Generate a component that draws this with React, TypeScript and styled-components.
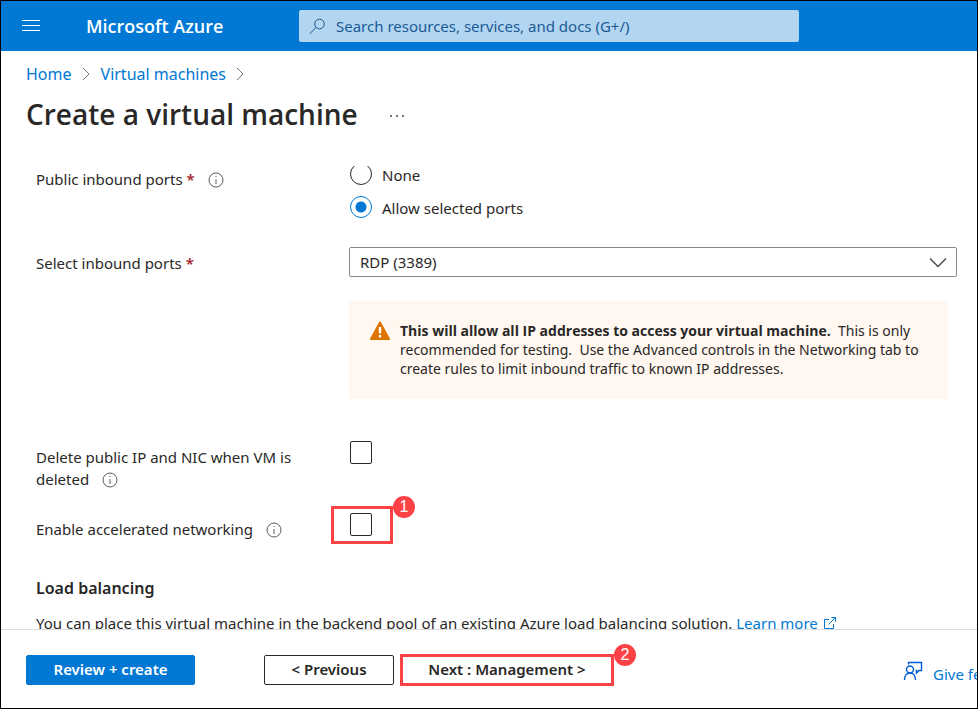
import React, { useLayoutEffect, useRef } from "react";
import styled, { createGlobalStyle } from "styled-components";

const blue = "#0078d4";
const ink = "#292827";
const callout = "#fd4245";

const GlobalStyle = createGlobalStyle`
  *, *::before, *::after { box-sizing: border-box; }
  body { margin: 0; background: #fff; }
  body, button, input, select {
    font-family: "Noto Sans", "Open Sans", sans-serif;
    font-size: 15px;
    line-height: 22px;
    color: ${ink};
  }
  h1, h2, p { margin: 0; }
`;

const Shell = styled.div`
  display: flex;
  flex-direction: column;
  height: 100vh;
  border: 1px solid #000;
  overflow: hidden;
`;

const TopBar = styled.header`
  display: flex;
  align-items: center;
  flex: none;
  height: 50px;
  padding: 0 20px;
  background: ${blue};
`;

const IconButton = styled.button`
  display: inline-flex;
  align-items: center;
  justify-content: center;
  padding: 0;
  border: 0;
  background: none;
  color: inherit;
  cursor: pointer;
`;

const MenuButton = styled(IconButton)`
  width: 20px;
  height: 20px;
  color: #fff;
`;

const Brand = styled.a`
  flex: 0 0 213px;
  margin-left: 45px;
  color: #fff;
  font-family: "Open Sans", sans-serif;
  font-size: 18px;
  font-weight: 600;
  text-decoration: none;
  white-space: nowrap;
`;

const SearchBox = styled.label`
  display: flex;
  align-items: center;
  flex: 0 1 500px;
  height: 32px;
  padding: 0 10px;
  gap: 10px;
  border-radius: 2px;
  background: #b2d6f2;
  color: #1b5a94;
`;

const SearchInput = styled.input`
  flex: 1;
  min-width: 0;
  padding: 0;
  border: 0;
  outline: 0;
  background: none;
  &::placeholder { color: #1b5a94; opacity: 1; }
`;

const PageHead = styled.div`
  flex: none;
  height: 115px;
  padding: 12px 25px 0;
`;

const Crumbs = styled.nav`
  display: flex;
  align-items: center;
  gap: 9px;
  font-size: 16px;
  color: #777;
`;

const Link = styled.a`
  color: ${blue};
  text-decoration: none;
`;

const TitleRow = styled.div`
  display: flex;
  align-items: center;
  gap: 30px;
  margin-top: 9px;
`;

const Title = styled.h1`
  font-family: "Open Sans", sans-serif;
  font-size: 28px;
  line-height: 40px;
  font-weight: 600;
`;

const MoreButton = styled(IconButton)`
  margin-top: 4px;
`;

const Scroller = styled.main`
  flex: 1;
  min-height: 0;
  overflow: auto;
  scrollbar-width: none;
`;

const Form = styled.form`
  padding: 20px 20px 60px 35px;
`;

const Row = styled.div<{ $gap?: number }>`
  display: grid;
  grid-template-columns: 313px minmax(0, 1fr);
  align-items: start;
  margin-top: ${(p) => p.$gap ?? 0}px;
`;

const Label = styled.div`
  padding: 5px 40px 0 0;
`;

const Required = styled.span`
  color: #a4262c;
  font-weight: 600;
`;

const InfoButton = styled(IconButton)`
  width: 16px;
  height: 16px;
  margin-left: 9px;
  vertical-align: -3px;
  color: #605e5c;
`;

const Choices = styled.div`
  display: flex;
  flex-direction: column;
  gap: 11px;
  padding-left: 1px;
`;

const Choice = styled.label`
  display: flex;
  align-items: center;
  gap: 10px;
  height: 22px;
`;

const ChoiceText = styled.span`
  padding-top: 2px;
`;

const Radio = styled.input`
  appearance: none;
  width: 22px;
  height: 22px;
  margin: 0;
  border: 1px solid ${ink};
  border-radius: 50%;
  &:checked {
    border-color: ${blue};
    background: radial-gradient(circle, ${blue} 5px, transparent 6px);
  }
`;

const SelectWrap = styled.div`
  display: grid;
  align-items: center;
  & > * { grid-area: 1 / 1; }
  & > svg { justify-self: end; margin-right: 10px; pointer-events: none; }
`;

const Select = styled.select`
  appearance: none;
  width: 100%;
  height: 30px;
  padding: 0 32px 0 10px;
  border: 1px solid #8a8886;
  border-radius: 2px;
  background: #fff;
`;

const Warning = styled.div`
  display: flex;
  gap: 10px;
  margin: 24px 9px 0 0;
  padding: 20px 20px 21px 21px;
  border-radius: 2px;
  background: #fff7f0;
  font-size: 14px;
  line-height: 19px;
  & > svg { flex: none; }
  b { font-family: "Open Sans", sans-serif; }
`;

const CheckCell = styled.div`
  position: relative;
  width: 22px;
  height: 23px;
  margin-left: 1px;
`;

const Checkbox = styled.input`
  appearance: none;
  display: block;
  width: 22px;
  height: 23px;
  margin: 0;
  border: 1px solid ${ink};
  border-radius: 2px;
  background: #fff;
  &:checked { background: ${blue}; }
`;

const Marker = styled.span`
  position: absolute;
  inset: -7px -21px -8px -19px;
  border: 3px solid ${callout};
  pointer-events: none;
`;

const Badge = styled.span`
  position: absolute;
  top: -13px;
  right: -25px;
  width: 22px;
  height: 22px;
  border-radius: 50%;
  background: ${callout};
  color: #fff;
  font: 16px/22px "Liberation Sans", sans-serif;
  text-align: center;
`;

const Heading = styled.h2`
  margin-top: 37px;
  font-size: 16px;
  line-height: 22px;
  font-weight: 600;
`;

const Description = styled.p`
  margin-top: 13px;
  white-space: nowrap;
  svg { margin-left: 5px; vertical-align: -1px; }
`;

const Footer = styled.footer`
  display: flex;
  align-items: center;
  flex: none;
  height: 79px;
  padding: 2px 0 0 25px;
  border-top: 1px solid #dcdcdc;
  white-space: nowrap;
  overflow: hidden;
`;

const Button = styled.button<{ $kind?: "primary" | "marked" }>`
  position: relative;
  flex: none;
  min-width: ${(p) => (p.$kind === "primary" ? 169 : p.$kind === "marked" ? 214 : 130)}px;
  height: ${(p) => (p.$kind === "marked" ? 32 : 30)}px;
  padding: 0 0 2px;
  border: ${(p) => (p.$kind === "marked" ? `3px solid ${callout}` : `1px solid ${p.$kind ? blue : ink}`)};
  border-radius: ${(p) => (p.$kind === "marked" ? 0 : 2)}px;
  background: ${(p) => (p.$kind === "primary" ? blue : "#fff")};
  color: ${(p) => (p.$kind === "primary" ? "#fff" : ink)};
  font-weight: 600;
`;

const Steps = styled.div`
  display: flex;
  align-items: center;
  gap: 6px;
  margin-left: 69px;
`;

const Feedback = styled(Link)`
  display: flex;
  align-items: center;
  flex: none;
  gap: 10px;
  width: 74px;
  margin: 8px 0 0 auto;
  svg { flex: none; margin-bottom: 6px; }
`;

const Chevron = () => (
  <svg width="11" height="16" viewBox="0 0 11 16" fill="none" stroke="currentColor" aria-hidden="true">
    <path d="M2 2l6 6-6 6" />
  </svg>
);

const Info = ({ about }: { about: string }) => (
  <InfoButton type="button" aria-label={`About ${about}`}>
    <svg width="16" height="16" viewBox="0 0 16 16" fill="none" stroke="currentColor" aria-hidden="true">
      <circle cx="8" cy="8" r="7" />
      <path d="M8 7v5M8 4v1" />
    </svg>
  </InfoButton>
);

export default function App() {
  const scroller = useRef<HTMLElement>(null);
  useLayoutEffect(() => {
    if (scroller.current) scroller.current.scrollTop = 23;
  }, []);

  return (
    <>
      <GlobalStyle />
      <Shell>
        <TopBar>
          <MenuButton type="button" aria-label="Show portal menu">
            <svg width="20" height="14" viewBox="0 0 20 14" stroke="currentColor" aria-hidden="true">
              <path d="M1 1.5h18M1 6.5h18M1 11.5h18" />
            </svg>
          </MenuButton>
          <Brand href="#home">Microsoft Azure</Brand>
          <SearchBox>
            <svg width="17" height="17" viewBox="0 0 17 17" fill="none" stroke="currentColor" aria-hidden="true">
              <circle cx="10.5" cy="6" r="4.8" />
              <path d="M7 9.5L.8 15.7" />
            </svg>
            <SearchInput type="text" aria-label="Search" placeholder="Search resources, services, and docs (G+/)" />
          </SearchBox>
        </TopBar>

        <PageHead>
          <Crumbs aria-label="Breadcrumb">
            <Link href="#home">Home</Link>
            <Chevron />
            <Link href="#vms">Virtual machines</Link>
            <Chevron />
          </Crumbs>
          <TitleRow>
            <Title>Create a virtual machine</Title>
            <MoreButton type="button" aria-label="More actions">
              <svg width="18" height="4" viewBox="0 0 18 4" fill="#333" aria-hidden="true">
                <circle cx="3" cy="2" r="0.9" />
                <circle cx="9" cy="2" r="0.9" />
                <circle cx="15" cy="2" r="0.9" />
              </svg>
            </MoreButton>
          </TitleRow>
        </PageHead>

        <Scroller ref={scroller}>
          <Form>
            <Row role="radiogroup" aria-labelledby="inbound">
              <Label>
                <span id="inbound">Public inbound ports</span> <Required>*</Required> <Info about="public inbound ports" />
              </Label>
              <Choices>
                <Choice>
                  <Radio type="radio" name="ports" />
                  <ChoiceText>None</ChoiceText>
                </Choice>
                <Choice>
                  <Radio type="radio" name="ports" defaultChecked />
                  <ChoiceText>Allow selected ports</ChoiceText>
                </Choice>
              </Choices>
            </Row>

            <Row $gap={29}>
              <Label>
                <label htmlFor="select-ports">Select inbound ports</label> <Required>*</Required>
              </Label>
              <div>
                <SelectWrap>
                  <Select id="select-ports">
                    <option>RDP (3389)</option>
                  </Select>
                  <svg width="18" height="11" viewBox="0 0 18 11" fill="none" stroke="#444" strokeWidth="1.3" aria-hidden="true">
                    <path d="M1 1.5l8 8 8-8" />
                  </svg>
                </SelectWrap>
                <Warning role="note">
                  <svg width="20" height="19" viewBox="0 0 20 19" aria-hidden="true">
                    <path d="M10 1.5L19 18H1z" fill="#db7500" stroke="#db7500" strokeWidth="2" strokeLinejoin="round" />
                    <path d="M10 6v6.5M10 14v2.5" stroke="#fff" strokeWidth="2.4" />
                  </svg>
                  <p>
                    <b>This will allow all IP addresses to access your virtual machine.</b>&nbsp; This is only
                    recommended for testing.&nbsp; Use the Advanced controls in the Networking tab to create rules to
                    limit inbound traffic to known IP addresses.
                  </p>
                </Warning>
              </div>
            </Row>

            <Row $gap={42}>
              <Label>
                <label htmlFor="delete-ip">Delete public IP and NIC when VM is deleted</label>{" "}
                <Info about="deleting public IP and NIC" />
              </Label>
              <CheckCell>
                <Checkbox id="delete-ip" type="checkbox" />
              </CheckCell>
            </Row>

            <Row $gap={23}>
              <Label>
                <label htmlFor="accelerated">Enable accelerated networking</label>{" "}
                <Info about="accelerated networking" />
              </Label>
              <CheckCell>
                <Checkbox id="accelerated" type="checkbox" />
                <Marker>
                  <Badge>1</Badge>
                </Marker>
              </CheckCell>
            </Row>

            <Heading>Load balancing</Heading>
            <Description>
              You can place this virtual machine in the backend pool of an existing Azure load balancing solution.{" "}
              <Link href="#learn">
                Learn more
                <svg width="14" height="14" viewBox="0 0 14 14" fill="none" stroke="currentColor" aria-hidden="true">
                  <path d="M6 3.5H1.5v9h9V8M5.5 8.5l7-7M8.5 1.5h4v4" />
                </svg>
              </Link>
            </Description>
          </Form>
        </Scroller>

        <Footer>
          <Button type="button" $kind="primary">Review + create</Button>
          <Steps>
            <Button type="button">&lt; Previous</Button>
            <Button type="button" $kind="marked">
              Next : Management &gt;
              <Badge>2</Badge>
            </Button>
          </Steps>
          <Feedback href="#feedback">
            <svg width="20" height="20" viewBox="0 0 20 20" fill="none" stroke="#015cda" strokeWidth="1.4" aria-hidden="true">
              <path d="M5.5 3.5V1.5h13v8h-2.500l-2.500 2.500v-2.500h-1" />
              <circle cx="7" cy="8.500" r="3.500" />
              <path d="M1.500 19c0-4 2-7 5.500-7s5.500 3 5.500 7" />
            </svg>
            Give feedback
          </Feedback>
        </Footer>
      </Shell>
    </>
  );
}
